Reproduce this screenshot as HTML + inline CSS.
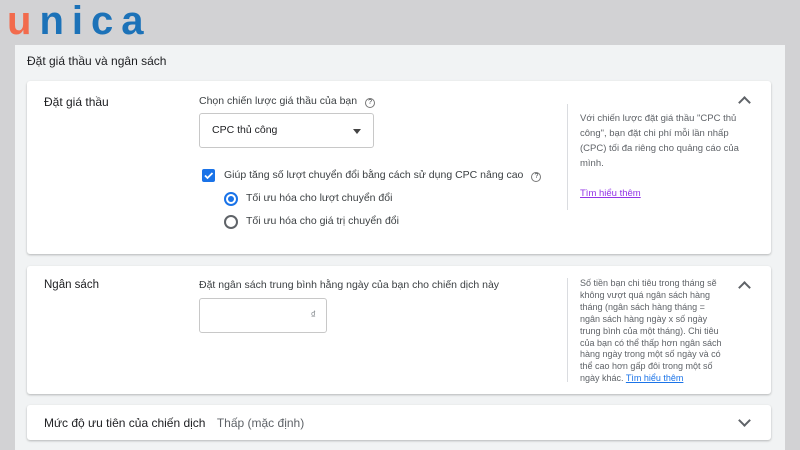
<!DOCTYPE html>
<html><head><meta charset="utf-8"><style>
*{box-sizing:border-box;margin:0;padding:0}
body{width:800px;height:450px;overflow:hidden;background:#d2d2d4;font-family:"Liberation Sans",Arial,sans-serif;position:relative;color:#3c4043}
.logo{position:absolute;left:7px;top:1px;font-size:40px;line-height:1;font-weight:bold;letter-spacing:8px;color:#1c72b8}
.logo span{color:#f26b4d}
.panel{position:absolute;left:15px;top:45px;width:770px;height:405px;background:#f1f3f4}
.title{position:absolute;left:27px;top:54px;font-size:12px;color:#202124}
.card{position:absolute;left:27px;width:744px;background:#fff;border-radius:3px;box-shadow:0 1px 2px rgba(0,0,0,.25)}
.lbl{position:absolute;font-size:12px;color:#202124}
.t{position:absolute;font-size:10.5px;color:#3c4043}
.help{position:absolute;left:540px;width:175px;border-left:1px solid #dadce0;padding-left:12px;font-size:9px;line-height:13.2px;color:#5f6368}
.chev{position:absolute;left:713px;width:9px;height:9px;border-left:2px solid #5f6368;border-top:2px solid #5f6368;transform:rotate(45deg)}
.q{display:inline-block;width:10px;height:10px;border:1px solid #777;border-radius:50%;font-size:7px;text-align:center;line-height:8px;margin-left:8px;vertical-align:0}
</style></head><body>
<div class="logo"><span>u</span>nica</div>
<div class="panel"></div>
<div class="title">Đặt giá thầu và ngân sách</div>

<div class="card" style="top:81px;height:173px">
  <div class="lbl" style="left:17px;top:14px">Đặt giá thầu</div>
  <div class="t" style="left:172px;top:14px">Chọn chiến lược giá thầu của bạn<span class="q">?</span></div>
  <div style="position:absolute;left:172px;top:32px;width:175px;height:35px;border:1px solid #c8c8c8;border-radius:3px">
    <div class="t" style="left:12px;top:10px;color:#202124">CPC thủ công</div>
    <div style="position:absolute;right:12px;top:15px;border-left:4px solid transparent;border-right:4px solid transparent;border-top:5px solid #444"></div>
  </div>
  <div style="position:absolute;left:175px;top:88px;width:13px;height:13px;background:#1a73e8;border-radius:2px">
    <svg width="13" height="13" viewBox="0 0 13 13"><path d="M3 6.5l2.5 2.5L10.5 4" stroke="#fff" stroke-width="1.8" fill="none"/></svg>
  </div>
  <div class="t" style="left:197px;top:88px">Giúp tăng số lượt chuyển đổi bằng cách sử dụng CPC nâng cao<span class="q">?</span></div>
  <div style="position:absolute;left:197px;top:111px;width:14px;height:14px;border:2px solid #1a73e8;border-radius:50%"><div style="margin:2px;width:6px;height:6px;border-radius:50%;background:#1a73e8"></div></div>
  <div class="t" style="left:219px;top:111px">Tối ưu hóa cho lượt chuyển đổi</div>
  <div style="position:absolute;left:197px;top:134px;width:14px;height:14px;border:2px solid #5f6368;border-radius:50%"></div>
  <div class="t" style="left:219px;top:134px">Tối ưu hóa cho giá trị chuyển đổi</div>
  <div class="help" style="top:23px;height:106px;padding-top:7px;line-height:15px;font-size:9.5px;width:172px">Với chiến lược đặt giá thầu "CPC thủ công", bạn đặt chi phí mỗi lần nhấp (CPC) tối đa riêng cho quảng cáo của mình.<br><br><span style="color:#9334e6;text-decoration:underline">Tìm hiểu thêm</span></div>
  <div class="chev" style="top:17px"></div>
</div>

<div class="card" style="top:266px;height:128px">
  <div class="lbl" style="left:17px;top:13px;font-size:11.5px">Ngân sách</div>
  <div class="t" style="left:172px;top:13px">Đặt ngân sách trung bình hằng ngày của bạn cho chiến dịch này</div>
  <div style="position:absolute;left:172px;top:32px;width:128px;height:35px;border:1px solid #c8c8c8;border-radius:3px"><span class="t" style="right:10px;top:10px;color:#80868b">₫</span></div>
  <div class="help" style="top:12px;width:160px;line-height:11.9px;height:104px">Số tiền bạn chi tiêu trong tháng sẽ không vượt quá ngân sách hàng tháng (ngân sách hàng tháng = ngân sách hàng ngày x số ngày trung bình của một tháng). Chi tiêu của bạn có thể thấp hơn ngân sách hàng ngày trong một số ngày và có thể cao hơn gấp đôi trong một số ngày khác. <span style="color:#1a73e8;text-decoration:underline">Tìm hiểu thêm</span></div>
  <div class="chev" style="top:17px"></div>
</div>

<div class="card" style="top:405px;height:35px">
  <div class="lbl" style="left:17px;top:11px">Mức độ ưu tiên của chiến dịch <span style="color:#5f6368;margin-left:8px">Thấp (mặc định)</span></div>
  <div class="chev" style="top:11px;transform:rotate(225deg)"></div>
</div>
</body></html>
